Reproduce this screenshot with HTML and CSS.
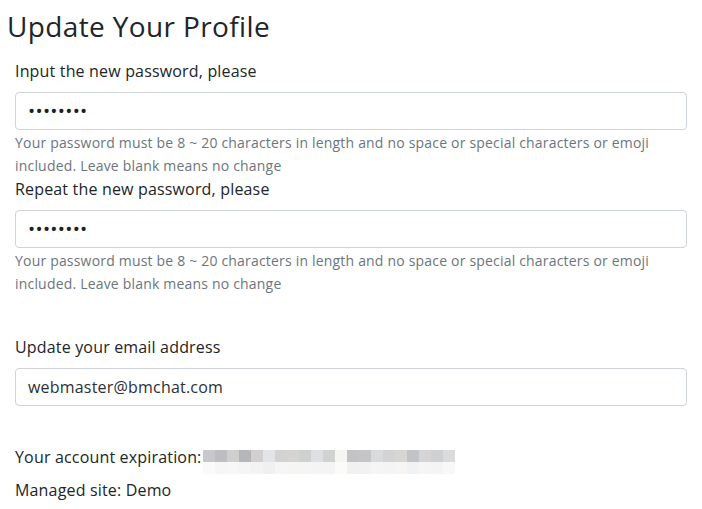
FILE: index.html
```html
<!DOCTYPE html>
<html lang="en">
<head>
<meta charset="utf-8">
<title>Update Your Profile</title>
<link rel="stylesheet" href="styles.css">
</head>
<body>
<h3 class="title">Update Your Profile</h3>
<form class="profile-form">
  <div class="group">
    <label class="label" for="pw1">Input the new password, please</label>
    <input class="control control-password" id="pw1" type="password" value="12345678">
    <small class="help">Your password must be 8 ~ 20 characters in length and no space or special characters or emoji included. Leave blank means no change</small>
  </div>
  <div class="group">
    <label class="label" for="pw2">Repeat the new password, please</label>
    <input class="control control-password" id="pw2" type="password" value="12345678">
    <small class="help">Your password must be 8 ~ 20 characters in length and no space or special characters or emoji included. Leave blank means no change</small>
  </div>
  <div class="group group-email">
    <label class="label" for="email">Update your email address</label>
    <input class="control" id="email" type="text" value="webmaster@bmchat.com">
  </div>
  <div class="info">
    <p class="info-line">Your account expiration:<span class="blur" aria-hidden="true"><span class="row row-top"><i style="background:#c8c8cc"></i><i style="background:#bdbdc2"></i><i style="background:#cfcfcf"></i><i style="background:#b5b6ba"></i><i style="background:#d2d0cf"></i><i style="background:#e2e4e8"></i><i style="background:#d2d2d2"></i><i style="background:#d6d4d2"></i><i style="background:#cfd1d0"></i><i style="background:#dddfe2"></i><i style="background:#d0d2d1"></i><i style="background:#f5f5f3"></i><i style="background:#c3c3c5"></i><i style="background:#c5c5c7"></i><i style="background:#d9dadc"></i><i style="background:#d3d3d5"></i><i style="background:#d8d6d3"></i><i style="background:#c0c3c8"></i><i style="background:#d5d5d5"></i><i style="background:#cfd0d2"></i><i style="background:#dbdbdb"></i></span><span class="row row-bottom"><i style="background:#fafafa"></i><i style="background:#f6f6f6"></i><i style="background:#f7f7f7"></i><i style="background:#f5f5f5"></i><i style="background:#f3f3f3"></i><i style="background:#eff0f2"></i><i style="background:#f6f6f6"></i><i style="background:#f5f5f4"></i><i style="background:#f4f5f4"></i><i style="background:#f4f4f6"></i><i style="background:#f3f4f3"></i><i style="background:#fbfbfa"></i><i style="background:#f1f1f2"></i><i style="background:#f2f2f3"></i><i style="background:#f5f5f6"></i><i style="background:#f4f4f5"></i><i style="background:#f6f5f4"></i><i style="background:#f1f2f3"></i><i style="background:#f5f5f5"></i><i style="background:#f4f4f5"></i><i style="background:#f8f8f8"></i></span></span></p>
    <p class="info-line">Managed site: Demo</p>
  </div>
</form>
</body>
</html>
```

FILE: styles.css
```css
* {
  box-sizing: border-box;
}

body {
  margin: 0;
  background: #ffffff;
  color: #212529;
  font-family: "Open Sans", "Noto Sans", "Liberation Sans", sans-serif;
  font-size: 16px;
  line-height: 24px;
  letter-spacing: 0.17px;
}

.title {
  margin: 9px 0 0 7px;
  font-size: 28px;
  font-weight: 400;
  line-height: 34px;
  letter-spacing: 0.37px;
  color: #212529;
}

.profile-form {
  margin: 16px 15px 0 15px;
}

.group {
  display: flex;
  flex-direction: column;
}

.label {
  display: block;
  height: 24px;
  margin-bottom: 9px;
  font-size: 16px;
  line-height: 24px;
  color: #212529;
}

.control {
  display: block;
  width: 100%;
  height: 38px;
  padding: 6px 12px;
  border: 1px solid #ced4da;
  border-radius: 4px;
  background: #ffffff;
  color: #2b3035;
  font-family: inherit;
  font-size: 16px;
  line-height: 24px;
  letter-spacing: 0.2px;
  outline: none;
}

.control-password {
  color: #1c1f23;
  font-size: 19px;
  letter-spacing: 0.3px;
}

.help {
  display: block;
  margin-top: 1px;
  font-size: 14px;
  line-height: 23px;
  letter-spacing: 0.19px;
  color: #6c757d;
}

.group-email {
  margin-top: 40px;
}

.info {
  margin-top: 39px;
  display: flex;
  flex-direction: column;
  gap: 9px;
}

.info-line {
  margin: 0;
  height: 24px;
  font-size: 16px;
  line-height: 24px;
  color: #212529;
  display: flex;
  align-items: flex-start;
}

.blur {
  display: inline-flex;
  flex-direction: column;
  margin-top: 5px;
  margin-left: 1px;
}

.row {
  display: flex;
}

.row i {
  display: block;
  width: 12px;
  height: 12px;
}
```
